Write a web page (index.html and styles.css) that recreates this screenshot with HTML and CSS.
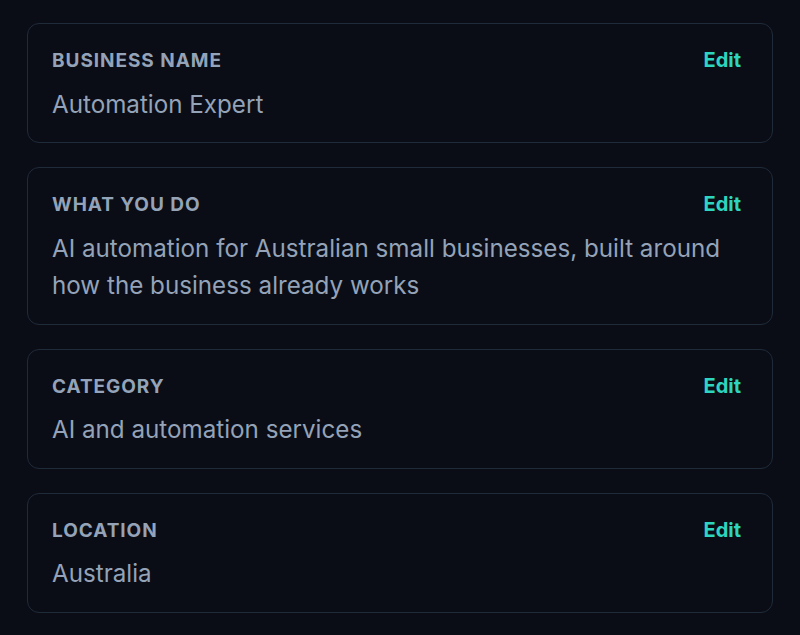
FILE: index.html
```html
<!DOCTYPE html>
<html lang="en">
<head>
<meta charset="utf-8">
<title>Business profile</title>
<link rel="stylesheet" href="styles.css">
</head>
<body>
<main class="list">
  <section class="card">
    <div class="card-head">
      <div class="label">Business name</div>
      <button class="edit" type="button">Edit</button>
    </div>
    <div class="value">Automation Expert</div>
  </section>
  <section class="card">
    <div class="card-head">
      <div class="label">What you do</div>
      <button class="edit" type="button">Edit</button>
    </div>
    <div class="value">AI automation for Australian small businesses, built around how the business already works</div>
  </section>
  <section class="card">
    <div class="card-head">
      <div class="label">Category</div>
      <button class="edit" type="button">Edit</button>
    </div>
    <div class="value">AI and automation services</div>
  </section>
  <section class="card">
    <div class="card-head">
      <div class="label">Location</div>
      <button class="edit" type="button">Edit</button>
    </div>
    <div class="value">Australia</div>
  </section>
</main>
</body>
</html>
```

FILE: styles.css
```css
html, body {
  margin: 0;
  padding: 0;
  background: #0a0d16;
}
body {
  font-family: Inter, "Noto Sans", "Liberation Sans", sans-serif;
  color: #94a3b8;
}
.list {
  display: flex;
  flex-direction: column;
  gap: 24px;
  padding: 23px 27px;
}
.card {
  border: 1px solid #202b3a;
  border-radius: 12px;
  background: #0a0d16;
  padding: 25px 24px 19px 24px;
}
.card-head {
  display: flex;
  justify-content: space-between;
  align-items: flex-start;
  gap: 16px;
}
.label {
  font-size: 19px;
  font-weight: 700;
  letter-spacing: 0.05em;
  text-transform: uppercase;
  color: #94a3b8;
  line-height: 23px;
}
.value {
  margin-top: 13.5px;
  font-size: 24.2px;
  line-height: 37.5px;
  color: #94a3b8;
}
.edit {
  font-family: inherit;
  font-size: 20px;
  font-weight: 700;
  color: #2dd4bf;
  background: none;
  border: none;
  padding: 0 7px 0 0;
  line-height: 23px;
  margin: 0;
  cursor: pointer;
}
```
